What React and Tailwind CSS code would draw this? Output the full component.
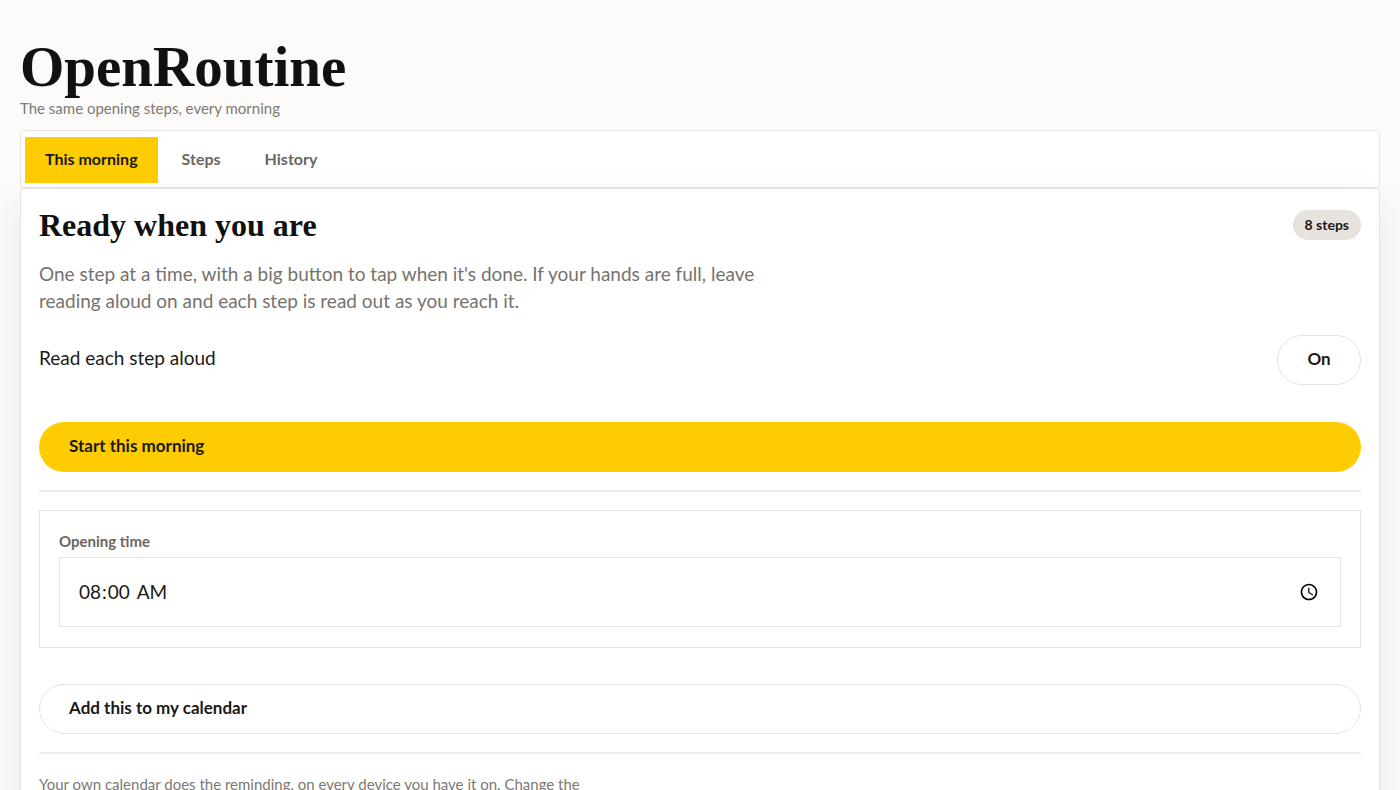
import { useState } from "react";

const TABS = ["This morning", "Steps", "History"];

const Divider = () => <hr className="border-0 border-t-2 border-[#efedeb]" />;

// Tab bar that sits directly on top of the panel
const TabBar = ({ active, onSelect }) => {
  return (
    <nav className="flex gap-1 rounded border border-[#e7e3e0] bg-white px-1 pt-1.5 pb-1">
      {TABS.map((tab) => (
        <button
          key={tab}
          type="button"
          onClick={() => onSelect(tab)}
          className={`h-[46px] px-5 pb-0.5 text-[16px] font-bold ${
            tab === active ? "bg-[#ffcc02] text-[#1c1917]" : "text-[#6b6661]"
          }`}
        >
          {tab}
        </button>
      ))}
    </nav>
  );
};

export default function App() {
  const [activeTab, setActiveTab] = useState("This morning");
  const [readAloud, setReadAloud] = useState(true);
  const [openingTime, setOpeningTime] = useState("08:00");

  return (
    <div className="min-h-screen bg-[#fcfbf9] px-5 pt-10 font-['Lato',sans-serif] text-[#1a1917]">
      <header>
        <h1 className="pb-0.5 font-['Liberation_Serif',serif] text-[57px] leading-[54px] font-bold text-[#12110f]">
          OpenRoutine
        </h1>
        <p className="pb-2.5 text-[15px] leading-6 text-[#7d7974]">
          The same opening steps, every morning
        </p>
      </header>

      <TabBar active={activeTab} onSelect={setActiveTab} />

      <main className="rounded border border-[#e7e3e0] bg-white px-[18px] pt-[21px] pb-10 shadow-[0_16px_40px_rgba(60,45,30,0.09)]">
        <div className="flex items-center justify-between">
          <h2 className="font-['Liberation_Serif',serif] text-[32px] leading-[30px] font-bold text-[#12110f]">
            Ready when you are
          </h2>
          <span className="rounded-full bg-[#e7e2dd] px-3 text-[14px] leading-[30px] font-bold">
            8 steps
          </span>
        </div>

        <p className="mt-5 max-w-[720px] text-[19px] leading-[27px] text-[#76726d]">
          One step at a time, with a big button to tap when it's done. If your
          hands are full, leave reading aloud on and each step is read out as
          you reach it.
        </p>

        <div className="mt-[21px] flex items-center justify-between text-[19px]">
          <span id="read-aloud" className="pb-1">Read each step aloud</span>
          <button
            type="button"
            aria-labelledby="read-aloud"
            aria-pressed={readAloud}
            onClick={() => setReadAloud(!readAloud)}
            className="h-[50px] w-[84px] rounded-full border border-[#e7e3e0] bg-white pb-0.5 text-[17px] font-bold"
          >
            {readAloud ? "On" : "Off"}
          </button>
        </div>

        <button
          type="button"
          className="mt-[37px] mb-[18px] h-[50px] w-full rounded-full bg-[#ffcc02] px-[30px] pb-0.5 text-left text-[17px] font-bold"
        >
          Start this morning
        </button>

        <Divider />

        <div className="mt-[18px] border border-[#e7e3e0] px-[19px] pt-[18px] pb-5">
          <label
            htmlFor="opening-time"
            className="block pb-1 text-[15px] leading-6 font-bold text-[#6b6661]"
          >
            Opening time
          </label>
          <input
            id="opening-time"
            type="time"
            value={openingTime}
            onChange={(e) => setOpeningTime(e.target.value)}
            className="h-[70px] w-full border border-[#e7e3e0] bg-white px-[18px] text-[19px]"
          />
        </div>

        <button
          type="button"
          className="mt-9 mb-[18px] h-[50px] w-full rounded-full border border-[#e7e3e0] bg-white px-[29px] pb-0.5 text-left text-[17px] font-bold"
        >
          Add this to my calendar
        </button>

        <Divider />

        <p className="mt-[18px] text-[15px] leading-6 text-[#7d7974]">
          Your own calendar does the reminding, on every device you have it on.
          Change the
        </p>
      </main>
    </div>
  );
}
